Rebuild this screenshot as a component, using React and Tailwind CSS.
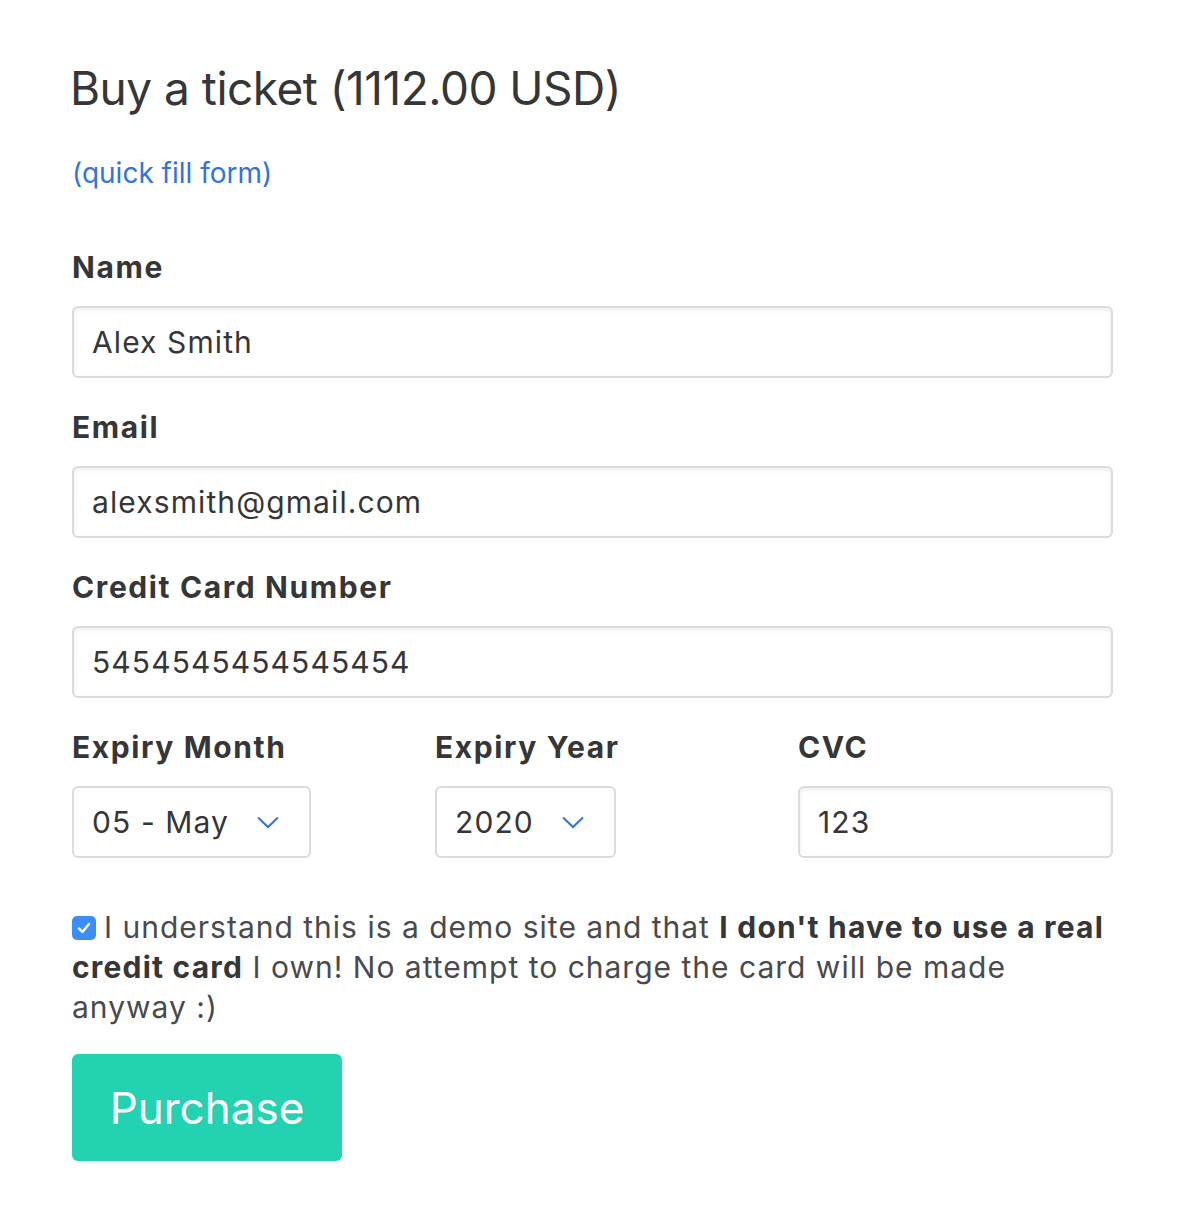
import { useState } from 'react';

const font = { fontFamily: 'Inter, "Noto Sans", sans-serif' };

const labelCls = 'text-[30px] leading-[40px] font-bold text-[#363636] tracking-[1.6px]';

const Chevron = () => (
  <svg width="22" height="13" viewBox="0 0 22 13" fill="none" className="shrink-0">
    <path d="M1 1.5 L11 11 L21 1.5" stroke="#3273dc" strokeWidth="2" />
  </svg>
);

const Field = ({ label, value }) => (
  <div className="flex flex-col">
    <label className={labelCls}>{label}</label>
    <input
      type="text"
      defaultValue={value}
      className="mt-[19px] h-[72px] w-full rounded-[6px] border-2 border-[#dbdbdb] bg-white px-[18px] text-[30px] tracking-[1.1px] text-[#363636] shadow-[inset_0_2px_4px_rgba(10,10,10,0.08)] outline-none"
    />
  </div>
);

const SelectBox = ({ value, gap }) => (
  <div className={`mt-[19px] flex h-[72px] w-fit items-center rounded-[6px] border-2 border-[#dbdbdb] bg-white pl-[18px] pr-[30px] text-[30px] tracking-[1.1px] text-[#363636] ${gap}`}>
    <span>{value}</span>
    <Chevron />
  </div>
);

export default function App() {
  const [agreed, setAgreed] = useState(true);

  return (
    <div className="min-h-[1228px] bg-white px-[72px] pt-[60px]" style={font}>
      <div className="w-[1041px]">
        <h1 className="text-[46px] leading-[56px] font-normal text-[#363636] tracking-[-0.5px] -ml-[2px]">
          Buy a ticket (1112.00 USD)
        </h1>
        <a href="#" className="mt-[37px] block text-[28px] leading-[40px] text-[#3273dc]">
          (quick fill form)
        </a>

        <div className="mt-[54px] flex flex-col gap-[29px]">
          <Field label="Name" value="Alex Smith" />
          <Field label="Email" value="alexsmith@gmail.com" />
          <Field label="Credit Card Number" value="5454545454545454" />

          <div className="grid grid-cols-3 gap-[48px]">
            <div className="flex flex-col">
              <label className={labelCls}>Expiry Month</label>
              <SelectBox value="05 - May" gap="gap-[28px]" />
            </div>
            <div className="flex flex-col">
              <label className={labelCls}>Expiry Year</label>
              <SelectBox value="2020" gap="gap-[28px]" />
            </div>
            <Field label="CVC" value="123" />
          </div>
        </div>

        <p className="mt-[49px] text-[30px] leading-[40px] tracking-[1px] text-[#4a4a4a]">
          <span
            onClick={() => setAgreed(!agreed)}
            className={`mr-[8px] inline-flex h-[24px] w-[24px] -translate-y-[2px] items-center justify-center rounded-[5px] align-middle ${agreed ? 'bg-[#3b8ef7]' : 'border-2 border-[#aaa] bg-white'}`}
          >
            {agreed && (
              <svg width="16" height="16" viewBox="0 0 16 16" fill="none">
                <path d="M3 8.5 L6.5 12 L13 4" stroke="white" strokeWidth="2.4" strokeLinecap="round" strokeLinejoin="round" />
              </svg>
            )}
          </span>
          I understand this is a demo site and that{' '}
          <strong className="font-bold text-[#363636] tracking-[1.2px]">I don't have to use a real credit card</strong> I own! No attempt to
          charge the card will be made anyway :)
        </p>

        <button className="mt-[27px] h-[107px] w-[270px] rounded-[6px] bg-[#23d2b1] text-[44px] text-white">
          Purchase
        </button>
      </div>
    </div>
  );
}
